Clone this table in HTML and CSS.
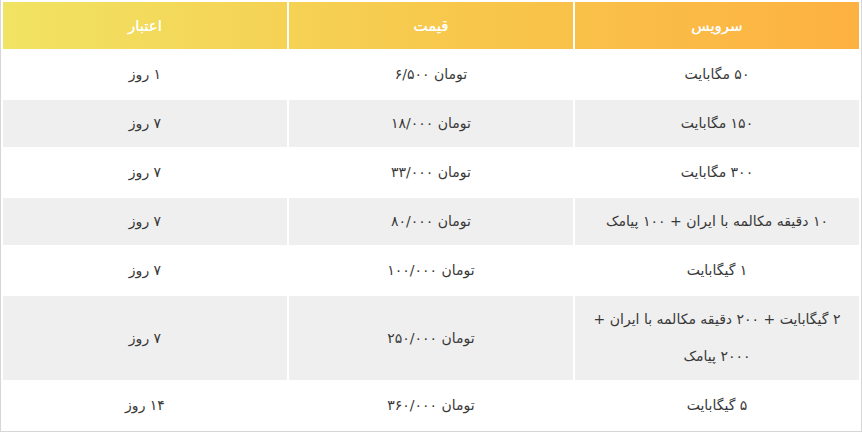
FILE: index.html
```html
<!DOCTYPE html>
<html lang="fa" dir="rtl">
<head>
<meta charset="utf-8">
<title>تعرفه بسته‌ها</title>
<link rel="stylesheet" href="styles.css">
</head>
<body>
<table class="plans">
  <thead>
    <tr class="head-row">
      <th>سرویس</th>
      <th>قیمت</th>
      <th>اعتبار</th>
    </tr>
  </thead>
  <tbody>
    <tr>
      <td>۵۰ مگابایت</td>
      <td>تومان ۶/۵۰۰</td>
      <td>۱ روز</td>
    </tr>
    <tr>
      <td>۱۵۰ مگابایت</td>
      <td>تومان ۱۸/۰۰۰</td>
      <td>۷ روز</td>
    </tr>
    <tr>
      <td>۳۰۰ مگابایت</td>
      <td>تومان ۳۳/۰۰۰</td>
      <td>۷ روز</td>
    </tr>
    <tr>
      <td>۱۰ دقیقه مکالمه با ایران + ۱۰۰ پیامک</td>
      <td>تومان ۸۰/۰۰۰</td>
      <td>۷ روز</td>
    </tr>
    <tr>
      <td>۱ گیگابایت</td>
      <td>تومان ۱۰۰/۰۰۰</td>
      <td>۷ روز</td>
    </tr>
    <tr>
      <td>۲ گیگابایت + ۲۰۰ دقیقه مکالمه با ایران + ۲۰۰۰ پیامک</td>
      <td>تومان ۲۵۰/۰۰۰</td>
      <td>۷ روز</td>
    </tr>
    <tr>
      <td>۵ گیگابایت</td>
      <td>تومان ۳۶۰/۰۰۰</td>
      <td>۱۴ روز</td>
    </tr>
  </tbody>
</table>
</body>
</html>
```
FILE: styles.css
```css
html, body {
  margin: 0;
  padding: 0;
  background: #ffffff;
}

body {
  font-family: "DejaVu Sans", "Noto Sans", sans-serif;
  font-size: 14px;
  color: #383838;
}

.plans {
  width: 862px;
  table-layout: fixed;
  border-collapse: separate;
  border-spacing: 2px;
  border: 1px solid #d6d6d6;
  border-top: none;
  background: #ffffff;
}

.head-row {
  background: linear-gradient(to left, #fdb141 0%, #f7c94d 50%, #f1e363 100%);
}

.plans th {
  height: 47px;
  padding: 0 10px;
  color: #ffffff;
  font-weight: normal;
  font-size: 15px;
  text-align: center;
  vertical-align: middle;
  text-shadow: 0 0 0.4px #ffffff;
}

.plans td {
  padding: 5px 10px;
  height: 37px;
  line-height: 37px;
  text-align: center;
  vertical-align: middle;
}

.plans tbody tr:nth-child(even) td {
  background: #efefef;
}
```
